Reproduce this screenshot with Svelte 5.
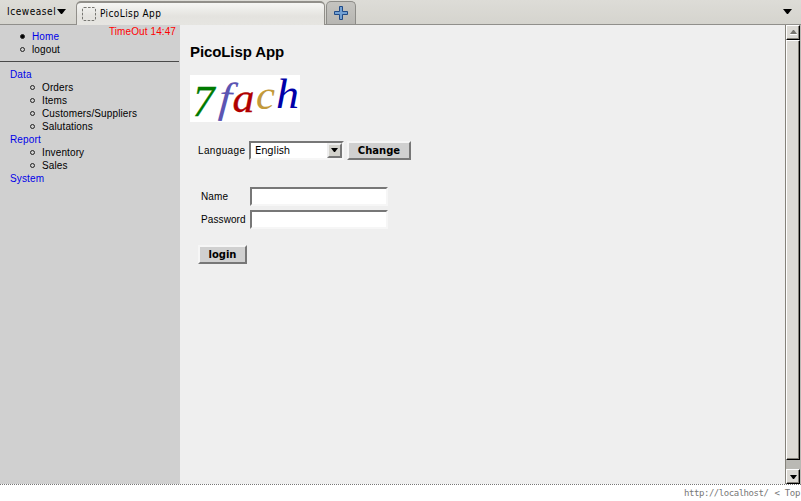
<script>
  const sections = [
    { name: 'Data', items: ['Orders', 'Items', 'Customers/Suppliers', 'Salutations'] },
    { name: 'Report', items: ['Inventory', 'Sales'] },
    { name: 'System', items: [] }
  ];
  let name = $state('');
  let password = $state('');
</script>

<div class="window">
  <header>
    <div class="brand"><span>Iceweasel</span>
      <svg width="9" height="6" viewBox="0 0 9 6"><path d="M0 0H9L5 5H4Z" fill="#000" /></svg>
    </div>
    <div class="tab">
      <svg width="14" height="14" viewBox="0 0 14 14"><rect x=".5" y=".5" width="13" height="13" rx="1.5" fill="none" stroke="#777772" stroke-dasharray="2.6 1.4" /></svg>
      <span>PicoLisp App</span>
    </div>
    <div class="plus">
      <svg width="14" height="14" viewBox="0 0 14 14"><path d="M5.5.5H8.5V5.5H13.5V8.5H8.5V13.5H5.5V8.5H.5V5.5H5.5Z" fill="#72a0d3" stroke="#204a87" /></svg>
    </div>
    <svg class="all" width="9" height="6" viewBox="0 0 9 6"><path d="M0 0H9L5 5H4Z" fill="#000" /></svg>
  </header>

  <div class="body">
    <aside>
      <div class="timeout">TimeOut 14:47</div>
      <ul class="top">
        <li><i class="dot full"></i><a href="#home">Home</a></li>
        <li><i class="dot"></i><span>logout</span></li>
      </ul>
      <nav>
        {#each sections as s}
          <a class="section" href="#{s.name}">{s.name}</a>
          <ul>
            {#each s.items as item}
              <li><i class="dot"></i><span>{item}</span></li>
            {/each}
          </ul>
        {/each}
      </nav>
    </aside>

    <main>
      <h1>PicoLisp App</h1>
      <svg class="logo" width="110" height="47" viewBox="0 0 110 47">
        <rect width="110" height="47" fill="#fff" />
        <g font-family="'Liberation Serif', serif" font-style="italic" stroke-width=".3">
          <text transform="translate(2.5 40.5) scale(1.1 1)" font-size="44" fill="#007a00" stroke="#007a00" textLength="20" lengthAdjust="spacingAndGlyphs">7</text>
          <text transform="translate(28 36.5) rotate(4)" font-size="43" fill="#5c55b2" stroke="#5c55b2" stroke-width="0" textLength="13" lengthAdjust="spacingAndGlyphs">f</text>
          <text transform="translate(42.5 36.5)" font-size="42" fill="#b00000" stroke="#b00000" textLength="22" lengthAdjust="spacingAndGlyphs">a</text>
          <text transform="translate(66 34)" font-size="43" fill="#c39a3b" textLength="19" lengthAdjust="spacingAndGlyphs">c</text>
          <text transform="translate(86 33)" font-size="43" fill="#0000a8" stroke="#0000a8" stroke-width="0" textLength="23" lengthAdjust="spacingAndGlyphs">h</text>
        </g>
      </svg>

      <div class="lang">
        <span class="label">Language</span>
        <div class="select">
          <span>English</span>
          <b><svg width="7" height="4" viewBox="0 0 7 4"><path d="M0 0H7L4 4H3Z" fill="#000" /></svg></b>
        </div>
        <button class="change">Change</button>
      </div>

      <form>
        <label><span class="n">Name</span><input bind:value={name} /></label>
        <label><span class="p">Password</span><input type="password" bind:value={password} /></label>
        <button class="login" type="button">login</button>
      </form>
    </main>

    <div class="scroll">
      <div class="btn"><svg width="7" height="5" viewBox="0 0 7 5"><path d="M3 0H4L7 4H0Z" fill="#77756f" /><path d="M0 4.5H7" stroke="#fff" /></svg></div>
      <div class="thumb"></div>
      <div class="btn down"><svg width="7" height="4" viewBox="0 0 7 4"><path d="M0 0H7L4 4H3Z" fill="#000" /></svg></div>
    </div>
  </div>

  <footer><span>http://localhost/</span><span class="t">&lt; Top</span></footer>
</div>

<style>
  :global(body) { margin: 0; overflow: hidden; }
  * { box-sizing: border-box; }
  .window { width: 801px; height: 501px; display: flex; flex-direction: column; background: #fff; font: 10px/13px 'Liberation Sans', sans-serif; color: #000; }
  svg { display: block; flex: none; overflow: visible; }
  ul { list-style: none; margin: 0; padding: 0; }
  a { color: #0000e8; text-decoration: none; }

  header { height: 25px; flex: none; display: flex; align-items: flex-end; background: linear-gradient(#dddcd7, #d5d4ce); border-bottom: 1px solid #908f8b; font: 10px/14px 'DejaVu Sans Condensed', 'DejaVu Sans', sans-serif; }
  .brand { width: 76px; height: 24px; padding: 0 0 0 7px; display: flex; align-items: center; }
  .brand span { width: 50px; letter-spacing: .55px; }
  .tab { width: 249px; height: 24px; margin-bottom: -1px; padding: 0 0 1px 5px; display: flex; align-items: center; gap: 4px; border: 1px solid #918f8a; border-width: 2px 1px 0; border-radius: 5px 5px 0 0; background: linear-gradient(#f6f6f4, #e4e3df 60%, #e6e5e1); }
  .tab span { letter-spacing: .4px; }
  .plus { width: 30px; height: 23px; margin-left: 1px; display: flex; justify-content: center; padding-top: 4px; border: 1px solid #8d8c88; border-bottom: 0; border-radius: 5px 5px 0 0; background: linear-gradient(#c5c4c0, #b7b6b2); }
  .all { margin: 0 9px 9px auto; }

  .body { height: 459px; flex: none; display: flex; }
  aside { width: 180px; background: #d0d0d0; position: relative; }
  .timeout { position: absolute; right: 4px; top: 0; color: #f00; letter-spacing: .1px; }
  .top { height: 37px; padding-top: 5px; border-bottom: 1px solid #4a4a4a; margin-right: 1px; }
  li { display: flex; align-items: center; height: 13px; letter-spacing: .12px; }
  .top li { padding-left: 20px; }
  .dot { width: 5px; height: 5px; flex: none; border: 1px solid #222; border-radius: 50%; margin-right: 7px; }
  .full { background: #000; }
  nav { padding-top: 6px; }
  nav li { padding-left: 30px; }
  .section { display: block; padding-left: 10px; letter-spacing: .15px; }

  main { flex: 1; background: #efefef; padding: 17px 0 0 10px; }
  h1 { margin: 0; font-size: 15px; line-height: 20px; letter-spacing: -.1px; height: 33px; }
  .lang { display: flex; align-items: center; margin: 18px 0 0 8px; height: 20px; }
  .label { width: 51px; letter-spacing: .35px; }
  .select { width: 95px; height: 19px; display: flex; align-items: center; justify-content: space-between; background: #fff; border: 2px solid; border-color: #777 #f6f6f6 #f6f6f6 #777; padding-left: 4px; font: 10px 'DejaVu Sans', sans-serif; letter-spacing: -.15px; }
  .select b { width: 15px; height: 15px; display: flex; align-items: center; justify-content: center; background: #d3d2cc; border: 2px solid; border-color: #eee #777 #777 #eee; }
  button { height: 19px; padding: 0; background: #d0d0d0; border: 2px solid; border-color: #f6f6f6 #777 #777 #f6f6f6; font: bold 10px/15px 'DejaVu Sans', sans-serif; color: #000; }
  .change { width: 64px; margin-left: 3px; }
  form { margin-top: 27px; }
  label { display: flex; align-items: center; height: 19px; padding-left: 11px; margin-bottom: 4px; }
  label span { width: 49px; letter-spacing: .1px; }
  input { width: 138px; height: 19px; padding: 0; background: #fff; border: 2px solid; border-color: #777 #f6f6f6 #f6f6f6 #777; outline: 0; }
  .login { display: block; width: 49px; margin: 16px 0 0 8px; }

  .scroll { width: 16px; display: flex; flex-direction: column; background: #bab9b4; border-left: 1px solid #85827a; padding-right: 1px; }
  .btn, .thumb { border: 1px solid; border-color: #fff #000 #000 #fff; background: #dcdad5; flex: none; box-shadow: inset -1px -1px #85827a; }
  .btn { height: 15px; display: flex; align-items: center; justify-content: center; }
  .thumb { height: 420px; }
  .down { margin-top: auto; }

  footer { flex: 1; border-top: 1px dotted #777; display: flex; justify-content: flex-end; padding: 1px 1px 0 0; font: 9px/14px 'DejaVu Sans Mono', monospace; color: #777; letter-spacing: -.46px; }
  .t { margin-left: 6px; letter-spacing: -.3px; }
</style>
